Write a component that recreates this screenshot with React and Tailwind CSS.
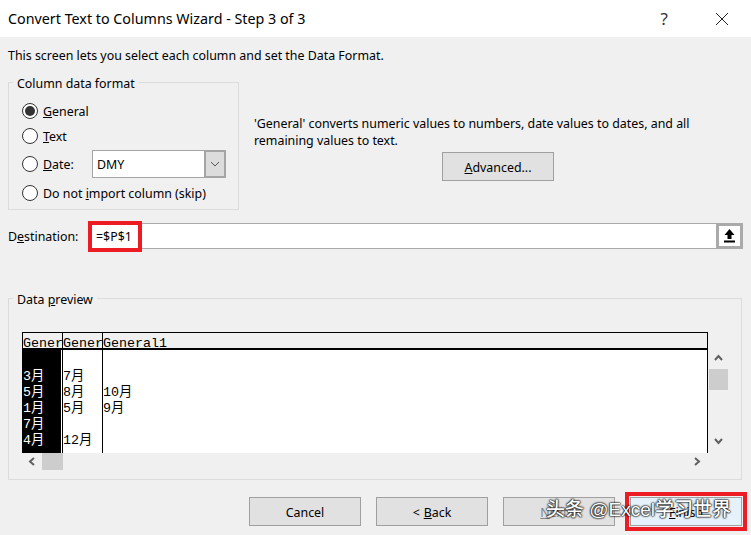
const ui = { fontFamily: '"Noto Sans", "Liberation Sans", sans-serif' };

function Chevron({ dir, className }) {
  const pts = {
    up: "1,6 4.5,2 8,6",
    down: "1,2 4.5,6 8,2",
    left: "6,1 2,4.5 6,8",
    right: "2,1 6,4.5 2,8",
  }[dir];
  return (
    <svg width="9" height="9" viewBox="0 0 9 9" className={className}>
      <polyline points={pts} fill="none" stroke="#606060" strokeWidth="2" />
    </svg>
  );
}

function Radio({ checked }) {
  return (
    <span className="w-[16px] h-[16px] shrink-0 rounded-full border border-[#333] bg-white flex items-center justify-center">
      {checked && <span className="w-[10px] h-[10px] rounded-full bg-[#333]" />}
    </span>
  );
}

function Btn({ children, className = "" }) {
  return (
    <div className={"w-[112px] h-[29px] pt-px flex items-center justify-center border border-[#a0a0a0] bg-[#e1e1e1] text-[12.4px] " + className}>
      {children}
    </div>
  );
}

const rows = [
  ["3月", "7月", ""],
  ["5月", "8月", "10月"],
  ["1月", "5月", "9月"],
  ["7月", "", ""],
  ["4月", "12月", ""],
];

const mono = { fontFamily: '"Liberation Mono", "Noto Sans CJK SC", monospace' };

export default function App() {
  return (
    <div className="relative w-[751px] h-[535px] overflow-hidden bg-[#f0f0f0] text-[12.4px] leading-[17px] text-black flex flex-col" style={ui}>
      <div className="h-[37px] bg-white flex items-center pl-2 shrink-0">
        <span className="text-[14.3px] leading-[20px]">Convert Text to Columns Wizard - Step 3 of 3</span>
        <span className="ml-auto mr-[47px] text-[17px] text-[#333]">?</span>
        <svg width="14" height="14" viewBox="0 0 14 14" className="mr-[22px]">
          <path d="M1 1 L13 13 M13 1 L1 13" stroke="#222" strokeWidth="1" fill="none" />
        </svg>
      </div>

      <div className="flex flex-col px-2">
        <p className="mt-[10px] h-[17px]">This screen lets you select each column and set the Data Format.</p>

        <div className="flex mt-[10px] h-[136px]">
          <fieldset className="w-[231px] h-[136px] border border-[#dcdcdc] shrink-0">
            <legend className="ml-[4px] px-1 h-[17px] leading-[19px]">Column data format</legend>
            <div className="pl-[13px]">
              <div className="mt-[10px] h-[20px] flex items-center gap-[5px]">
                <Radio checked />
                <span><u>G</u>eneral</span>
              </div>
              <div className="mt-[5px] h-[20px] flex items-center gap-[5px]">
                <Radio />
                <span><u>T</u>ext</span>
              </div>
              <div className="mt-[4px] h-[28px] flex items-center">
                <Radio />
                <span className="ml-[5px] w-[49px]"><u>D</u>ate:</span>
                <div className="w-[134px] h-[28px] flex bg-white border border-[#a5a5a5]">
                  <span className="flex-1 pl-[4px] self-center">DMY</span>
                  <span className="w-[22px] -my-px -mr-px bg-[#dcdcdc] border-2 border-[#a5a5a5] flex items-center justify-center">
                    <svg width="10" height="6" viewBox="0 0 10 6">
                      <polyline points="1,1 5,5 9,1" fill="none" stroke="#555" strokeWidth="1" />
                    </svg>
                  </span>
                </div>
              </div>
              <div className="mt-[5px] h-[20px] flex items-center gap-[5px]">
                <Radio />
                <span>Do not <u>i</u>mport column (skip)</span>
              </div>
            </div>
          </fieldset>

          <div className="ml-[15px] mt-[41px]">
            <p className="w-[470px]">'General' converts numeric values to numbers, date values to dates, and all remaining values to text.</p>
            <Btn className="ml-[188px] mt-[3px]"><span><u>A</u>dvanced...</span></Btn>
          </div>
        </div>

        <div className="flex items-center h-[26px] mt-[13px]">
          <span className="w-[80px]">D<u>e</u>stination:</span>
          <div className="w-[655px] h-[26px] flex bg-white border border-[#aaaaaa]">
            <span className="flex-1 self-center pl-[7px]">=$P$1</span>
            <span className="w-[27px] -my-px -mr-px bg-white border-[3px] border-[#aaaaaa] flex items-center justify-center">
              <svg width="11" height="14" viewBox="0 0 11 14">
                <path d="M5.5 0 L10.5 6 L7.5 6 L7.5 10 L3.5 10 L3.5 6 L0.5 6 Z" fill="#000" />
                <rect x="0" y="11.5" width="11" height="2" fill="#000" />
              </svg>
            </span>
          </div>
        </div>

        <fieldset className="mt-[41px] w-[734px] h-[190px] border border-[#dcdcdc] shrink-0">
          <legend className="ml-[4px] px-1 h-[17px] leading-[19px]">Data <u>p</u>review</legend>
          <div className="flex ml-[13px] mt-[25px] h-[121px]">
            <div className="w-[686px] h-[121px] bg-white border-r border-black flex flex-col text-[13.33px]" style={mono}>
              <div className="h-[18px] shrink-0 bg-[#f0f0f0] border-t border-b-2 border-black flex leading-[21px]">
                <span className="w-[40px] border-l border-black whitespace-nowrap">Gener</span>
                <span className="w-[40px] border-l border-black whitespace-nowrap">Gener</span>
                <span className="flex-1 border-l border-black">General1</span>
              </div>
              <div className="flex flex-1 leading-[16px]">
                <div className="w-[39px] bg-black text-white pt-[19px] pl-px">
                  {rows.map((r, i) => <div key={i} className="h-[16px] whitespace-nowrap">{r[0]}</div>)}
                </div>
                <div className="w-[40px] ml-px border-l border-black pt-[19px]">
                  {rows.map((r, i) => <div key={i} className="h-[16px] whitespace-nowrap">{r[1]}</div>)}
                </div>
                <div className="flex-1 border-l border-black pt-[19px]">
                  {rows.map((r, i) => <div key={i} className="h-[16px] whitespace-nowrap">{r[2]}</div>)}
                </div>
              </div>
            </div>
            <div className="w-[20px] flex flex-col items-center pt-[22px]">
              <Chevron dir="up" />
              <div className="w-[19px] h-[21px] bg-[#cdcdcd] mt-[6px]" />
              <Chevron dir="down" className="mt-[47px]" />
            </div>
          </div>
          <div className="flex items-center ml-[13px] h-[17px] w-[686px]">
            <Chevron dir="left" className="ml-[6px]" />
            <div className="w-[21px] h-[17px] bg-[#cdcdcd] ml-[5px]" />
            <Chevron dir="right" className="ml-auto mr-[6px]" />
          </div>
        </fieldset>

        <div className="flex justify-end gap-[15px] mt-[17px] pr-[1px]">
          <Btn>Cancel</Btn>
          <Btn>&lt; <u className="ml-1">B</u>ack</Btn>
          <Btn className="text-[#838383]"><span><u>N</u>ext &gt;</span></Btn>
          <Btn className="border-[#0078d7] bg-[#e5f1fb]"><span><u>F</u>inish</span></Btn>
        </div>
      </div>

      <div className="absolute left-[88px] top-[221px] w-[54px] h-[31px] border-4 border-[#ed1c24]" />
      <div className="absolute left-[625px] top-[492px] w-[122px] h-[39px] border-4 border-[#ed1c24]" />
      <span
        className="absolute left-[546px] top-[497px] text-[19px] leading-[26px] font-medium text-white whitespace-nowrap [text-shadow:0_0_2px_#000,0_0_2px_#000,0_0_1px_#000]"
        style={{ fontFamily: '"Liberation Sans", "Noto Sans CJK SC", sans-serif' }}
      >
        头条 @Excel学习世界
      </span>
    </div>
  );
}
